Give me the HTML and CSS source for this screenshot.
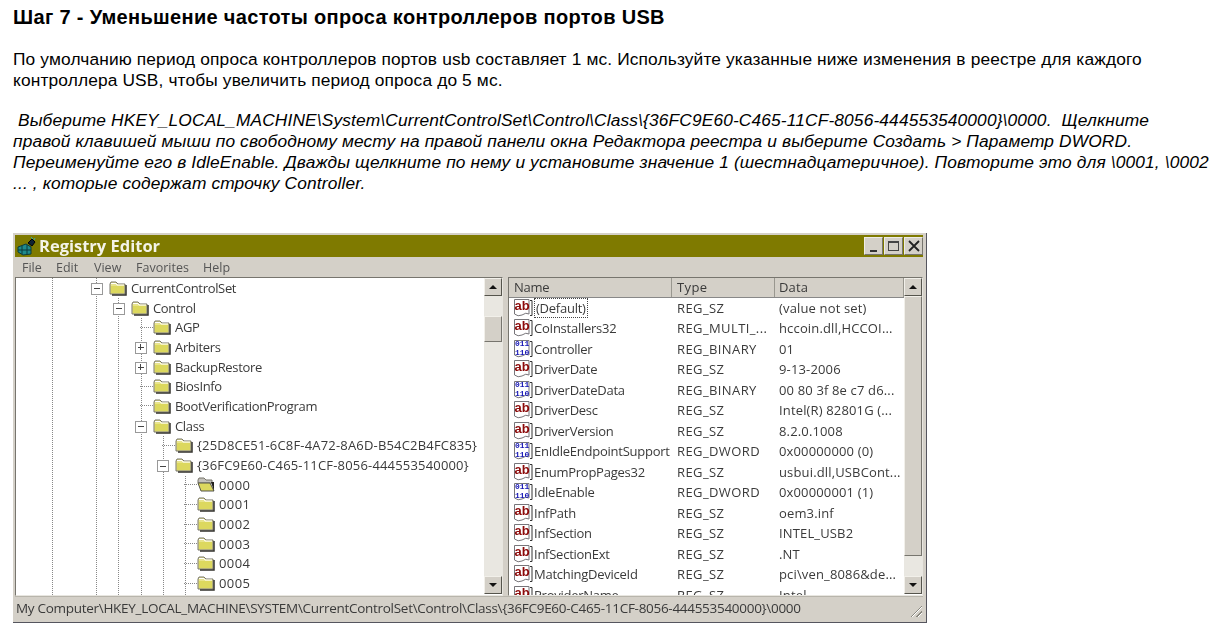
FILE: index.html
```html
<!DOCTYPE html>
<html lang="ru">
<head>
<meta charset="utf-8">
<title>Шаг 7</title>
<link rel="stylesheet" href="styles.css">
</head>
<body>
<svg class="defs" width="0" height="0" aria-hidden="true">
  <symbol id="folder" viewBox="0 0 18 16">
    <path d="M1 4 L2 2 H7 L9 4 H16 V14 H1 Z" fill="#e8e48c" stroke="#77756a" stroke-width="1"/>
    <path d="M2 6 H15 V13 H2 Z" fill="#dcd85e"/>
    <path d="M2 3.5 H7 L8 5 H15" fill="none" stroke="#fff" stroke-width="1"/>
    <path d="M17 5 V15 H3" fill="none" stroke="#33322c" stroke-width="1.5"/>
  </symbol>
  <symbol id="folder-open" viewBox="0 0 18 16">
    <path d="M1 3 L2 1 H7 L9 3 H15 V6 H1 Z" fill="#c4c2bc" stroke="#77756a"/>
    <path d="M1 6 H13 L17 14 H4 Z" fill="#dcd85e" stroke="#55544c"/>
    <path d="M14 5 L17 14 V5 Z" fill="#22211c"/>
  </symbol>
  <symbol id="page" viewBox="0 0 20 20">
    <path d="M1.5 1.5 H16 V16 Q13 14 9 17 Q5 19 1.5 16 Z" fill="#fff" stroke="#77757a"/>
    <path d="M17 2.5 H19 V17.5 H17" fill="none" stroke="#333"/>
  </symbol>
</svg>

<main class="article">
  <h1 class="step">Шаг 7 - Уменьшение частоты опроса контроллеров портов USB</h1>
  <p class="lead">По умолчанию период опроса контроллеров портов usb составляет 1 мс. Используйте указанные ниже изменения в реестре для каждого контроллера USB, чтобы увеличить период опроса до 5 мс.</p>
  <p class="note">&nbsp;Выберите HKEY_LOCAL_MACHINE\System\CurrentControlSet\Control\Class\{36FC9E60-C465-11CF-8056-444553540000}\0000.&nbsp; Щелкните<br>правой клавишей мыши по свободному месту на правой панели окна Редактора реестра и выберите Создать &gt; Параметр DWORD.<br>Переименуйте его в IdleEnable. Дважды щелкните по нему и установите значение 1 (шестнадцатеричное). Повторите это для \0001, \0002<br>... , которые содержат строчку Controller.</p>

  <section class="window">
    <header class="titlebar">
      <svg class="app-icon" viewBox="0 0 20 20" width="20" height="20">
        <path d="M1 11 L9 8 L14 11 L14 18 L6 19 L1 16 Z" fill="#1f8a8c" stroke="#0b3b3c"/>
        <path d="M5 10 V18 M10 9 V18 M1 14 L14 14" stroke="#0b3b3c" fill="none"/>
        <path d="M11 7 L15 3 L18 6 L15 10 Z" fill="#123" stroke="#000"/>
        <path d="M14 1 L16 3 M18 2 L17 4" stroke="#3aa" fill="none"/>
      </svg>
      <span class="title">Registry Editor</span>
      <div class="caption-buttons">
        <span class="cap"><i class="cap-min"></i></span>
        <span class="cap"><i class="cap-max"></i></span>
        <span class="cap cap-close">
          <svg viewBox="0 0 12 12" width="12" height="12"><path d="M1 1 L11 11 M11 1 L1 11" stroke="#222" stroke-width="1.8"/></svg>
        </span>
      </div>
    </header>
    <nav class="menubar">
      <span class="m-file">File</span><span class="m-edit">Edit</span><span class="m-view">View</span><span class="m-fav">Favorites</span><span>Help</span>
    </nav>
    <div class="panes">
      <div class="pane tree-pane">
        <div class="tree">
          <svg class="guides" width="470" height="320" aria-hidden="true">
            <path d="M36.5 0V320M80.5 0V320M102.5 20V320M125.5 40V320M147.5 158V320M169.5 198V320" fill="none" stroke="#888" stroke-dasharray="1 1"/>
          </svg>
          <div class="row l0"><span class="twisty minus"></span><svg class="fld"><use href="#folder"/></svg><span class="tl">CurrentControlSet</span></div>
          <div class="row l1"><span class="twisty minus"></span><svg class="fld"><use href="#folder"/></svg><span class="tl">Control</span></div>
          <div class="row l2"><span class="twisty none"></span><svg class="fld"><use href="#folder"/></svg><span class="tl">AGP</span></div>
          <div class="row l2"><span class="twisty plus"></span><svg class="fld"><use href="#folder"/></svg><span class="tl">Arbiters</span></div>
          <div class="row l2"><span class="twisty plus"></span><svg class="fld"><use href="#folder"/></svg><span class="tl">BackupRestore</span></div>
          <div class="row l2"><span class="twisty none"></span><svg class="fld"><use href="#folder"/></svg><span class="tl">BiosInfo</span></div>
          <div class="row l2"><span class="twisty none"></span><svg class="fld"><use href="#folder"/></svg><span class="tl">BootVerificationProgram</span></div>
          <div class="row l2"><span class="twisty minus"></span><svg class="fld"><use href="#folder"/></svg><span class="tl">Class</span></div>
          <div class="row l3"><span class="twisty none"></span><svg class="fld"><use href="#folder"/></svg><span class="tl guid">{25D8CE51-6C8F-4A72-8A6D-B54C2B4FC835}</span></div>
          <div class="row l3"><span class="twisty minus"></span><svg class="fld"><use href="#folder"/></svg><span class="tl guid">{36FC9E60-C465-11CF-8056-444553540000}</span></div>
          <div class="row l4"><span class="twisty none"></span><svg class="fld"><use href="#folder-open"/></svg><span class="tl num">0000</span></div>
          <div class="row l4"><span class="twisty none"></span><svg class="fld"><use href="#folder"/></svg><span class="tl num">0001</span></div>
          <div class="row l4"><span class="twisty none"></span><svg class="fld"><use href="#folder"/></svg><span class="tl num">0002</span></div>
          <div class="row l4"><span class="twisty none"></span><svg class="fld"><use href="#folder"/></svg><span class="tl num">0003</span></div>
          <div class="row l4"><span class="twisty none"></span><svg class="fld"><use href="#folder"/></svg><span class="tl num">0004</span></div>
          <div class="row l4"><span class="twisty none"></span><svg class="fld"><use href="#folder"/></svg><span class="tl num">0005</span></div>
        </div>
        <div class="scrollbar">
          <span class="sb-btn"><i class="arrow up"></i></span>
          <div class="track track-left"><span class="thumb thumb-left"></span></div>
          <span class="sb-btn"><i class="arrow down"></i></span>
        </div>
      </div>
      <div class="splitter"></div>
      <div class="pane list-pane">
        <div class="list">
          <div class="thead"><span class="th c-name">Name</span><span class="th c-type">Type</span><span class="th c-data">Data</span></div>
          <div class="tr"><span class="c-name"><span class="ico"><svg class="page"><use href="#page"/></svg><b class="ab-t">ab</b></span><span class="focus">(Default)</span></span><span class="c-type">REG_SZ</span><span class="c-data">(value not set)</span></div>
          <div class="tr"><span class="c-name"><span class="ico"><svg class="page"><use href="#page"/></svg><b class="ab-t">ab</b></span>CoInstallers32</span><span class="c-type">REG_MULTI_...</span><span class="c-data">hccoin.dll,HCCOI...</span></div>
          <div class="tr"><span class="c-name"><span class="ico"><svg class="page"><use href="#page"/></svg><b class="bin-t">011<br>110</b></span>Controller</span><span class="c-type">REG_BINARY</span><span class="c-data">01</span></div>
          <div class="tr"><span class="c-name"><span class="ico"><svg class="page"><use href="#page"/></svg><b class="ab-t">ab</b></span>DriverDate</span><span class="c-type">REG_SZ</span><span class="c-data">9-13-2006</span></div>
          <div class="tr"><span class="c-name"><span class="ico"><svg class="page"><use href="#page"/></svg><b class="bin-t">011<br>110</b></span>DriverDateData</span><span class="c-type">REG_BINARY</span><span class="c-data">00 80 3f 8e c7 d6...</span></div>
          <div class="tr"><span class="c-name"><span class="ico"><svg class="page"><use href="#page"/></svg><b class="ab-t">ab</b></span>DriverDesc</span><span class="c-type">REG_SZ</span><span class="c-data">Intel(R) 82801G (...</span></div>
          <div class="tr"><span class="c-name"><span class="ico"><svg class="page"><use href="#page"/></svg><b class="ab-t">ab</b></span>DriverVersion</span><span class="c-type">REG_SZ</span><span class="c-data">8.2.0.1008</span></div>
          <div class="tr"><span class="c-name"><span class="ico"><svg class="page"><use href="#page"/></svg><b class="bin-t">011<br>110</b></span>EnIdleEndpointSupport</span><span class="c-type">REG_DWORD</span><span class="c-data">0x00000000 (0)</span></div>
          <div class="tr"><span class="c-name"><span class="ico"><svg class="page"><use href="#page"/></svg><b class="ab-t">ab</b></span>EnumPropPages32</span><span class="c-type">REG_SZ</span><span class="c-data">usbui.dll,USBCont...</span></div>
          <div class="tr"><span class="c-name"><span class="ico"><svg class="page"><use href="#page"/></svg><b class="bin-t">011<br>110</b></span>IdleEnable</span><span class="c-type">REG_DWORD</span><span class="c-data">0x00000001 (1)</span></div>
          <div class="tr"><span class="c-name"><span class="ico"><svg class="page"><use href="#page"/></svg><b class="ab-t">ab</b></span>InfPath</span><span class="c-type">REG_SZ</span><span class="c-data">oem3.inf</span></div>
          <div class="tr"><span class="c-name"><span class="ico"><svg class="page"><use href="#page"/></svg><b class="ab-t">ab</b></span>InfSection</span><span class="c-type">REG_SZ</span><span class="c-data">INTEL_USB2</span></div>
          <div class="tr"><span class="c-name"><span class="ico"><svg class="page"><use href="#page"/></svg><b class="ab-t">ab</b></span>InfSectionExt</span><span class="c-type">REG_SZ</span><span class="c-data">.NT</span></div>
          <div class="tr"><span class="c-name"><span class="ico"><svg class="page"><use href="#page"/></svg><b class="ab-t">ab</b></span>MatchingDeviceId</span><span class="c-type">REG_SZ</span><span class="c-data">pci\ven_8086&amp;de...</span></div>
          <div class="tr"><span class="c-name"><span class="ico"><svg class="page"><use href="#page"/></svg><b class="ab-t">ab</b></span>ProviderName</span><span class="c-type">REG_SZ</span><span class="c-data">Intel</span></div>
        </div>
        <div class="scrollbar">
          <span class="sb-btn"><i class="arrow up"></i></span>
          <div class="track track-right"><span class="thumb thumb-right"></span></div>
          <span class="sb-btn"><i class="arrow down"></i></span>
        </div>
      </div>
    </div>
    <footer class="statusbar">My Computer\HKEY_LOCAL_MACHINE\SYSTEM\CurrentControlSet\Control\Class\{36FC9E60-C465-11CF-8056-444553540000}\0000<span class="grip"></span></footer>
  </section>
</main>
</body>
</html>
```
FILE: styles.css
```css
* { box-sizing: border-box; }
html, body { margin: 0; padding: 0; background: #fff; overflow: hidden; }
body { width: 1220px; height: 641px; font-family: "Liberation Sans", Arial, sans-serif; color: #000; }
.defs { position: absolute; }
.article { padding: 7px 0 0 13px; }
.step { margin: 0; font-size: 20px; line-height: 21px; font-weight: bold; letter-spacing: 0.33px; }
.lead { margin: 21px 0 0; width: 1190px; font-size: 17.33px; line-height: 21px; letter-spacing: 0.14px; }
.note { margin: 19px 0 0; width: 1207px; font-size: 17.33px; line-height: 21px; font-style: italic; letter-spacing: 0.14px; white-space: nowrap; }

.window {
  margin-top: 39px; width: 914px; height: 390px; display: flex; flex-direction: column;
  background: #d4d0c8; padding: 2px 3px 3px 2px;
  border-right: 1px solid #55555e; border-bottom: 1px solid #55555e;
  font-family: "Open Sans", sans-serif; color: #3a3a3a; filter: blur(0.5px);
}
.titlebar { height: 22px; flex: none; background: #7f7a00; display: flex; align-items: center; padding: 0 0 0 2px; color: #fff; }
.app-icon { flex: none; }
.title { margin-left: 2px; font: bold 16.5px/22px "Open Sans", sans-serif; color: #f4f4e8; }
.caption-buttons { margin-left: auto; display: flex; gap: 1px; }
.cap { width: 19px; height: 18px; background: #d4d0c8; border: 1px solid; border-color: #eeece6 #77756e #77756e #eeece6; display: flex; align-items: center; justify-content: center; }
.cap-min { width: 7px; height: 2px; background: #333; margin-top: 9px; }
.cap-max { width: 11px; height: 10px; border: 1px solid #444; border-top-width: 2px; }

.menubar { height: 20px; flex: none; display: flex; align-items: center; padding-left: 7px; font-size: 12.5px; gap: 13px; color: #555; }
.m-file { width: 21px; }
.m-edit { width: 25px; }
.m-view { width: 29px; }
.m-fav { width: 54px; }

.panes { flex: 1; min-height: 0; display: flex; }
.pane { display: flex; border: 1px solid; border-color: #77756e #e8e6e0 #e8e6e0 #77756e; background: #fff; overflow: hidden; height: 319px; }
.tree-pane { width: 488px; flex: none; }
.list-pane { flex: 1; min-width: 0; }
.splitter { width: 5px; flex: none; }

.tree { flex: 1; position: relative; overflow: hidden; }
.guides { position: absolute; left: 0; top: 0; }
.row { position: relative; height: 19.7px; display: flex; align-items: center; font-size: 13px; line-height: 18px; white-space: nowrap; }
.l0 { padding-left: 75px; }
.l1 { padding-left: 97px; }
.l2 { padding-left: 119px; }
.l3 { padding-left: 141px; }
.l4 { padding-left: 163px; }
.twisty { width: 18px; height: 10px; flex: none; position: relative; }
.twisty.minus::before, .twisty.plus::before {
  content: ""; position: absolute; left: 0; top: 0; width: 10px; height: 10px;
  border: 1px solid #999;
  background: linear-gradient(#444, #444) center / 6px 1px no-repeat, #fff;
}
.twisty.plus::after { content: ""; position: absolute; left: 4.5px; top: 2px; width: 1px; height: 6px; background: #444; }
.twisty.none { border-bottom: 1px dotted #888; height: 6px; margin-bottom: 5px; margin-left: 5px; width: 13px; }
.fld { width: 18px; height: 16px; flex: none; }
.tl { margin-left: 4px; letter-spacing: -0.33px; }
.tl.guid { letter-spacing: 0.18px; }
.tl.num { letter-spacing: 0.4px; }

.scrollbar { width: 18px; flex: none; display: flex; flex-direction: column; background: #e9e7e1; height: 316px; }
.sb-btn { height: 18px; flex: none; background: #d4d0c8; border: 1px solid; border-color: #f2f0ea #55544c #55544c #f2f0ea; display: flex; align-items: center; justify-content: center; }
.arrow { width: 0; height: 0; border-left: 4px solid transparent; border-right: 4px solid transparent; }
.arrow.up { border-bottom: 4px solid #111; }
.arrow.down { border-top: 4px solid #111; }
.track { flex: 1; display: flex; flex-direction: column; }
.track-left { padding-top: 20px; }
.thumb { display: block; background: #d4d0c8; border: 1px solid; border-color: #f2f0ea #77756e #77756e #f2f0ea; }
.thumb-left { height: 26px; }
.thumb-right { height: 260px; }

.list { flex: 1; min-width: 0; overflow: hidden; font-size: 13px; }
.thead { height: 19.5px; display: flex; background: #d4d0c8; border-bottom: 1px solid #888; letter-spacing: -0.1px; }
.th { display: flex; align-items: center; border-right: 1px solid #99978f; line-height: 16px; }
.thead .c-name { padding-left: 5px; }
.c-name { width: 163px; flex: none; display: flex; align-items: center; letter-spacing: -0.25px; }
.c-type { width: 103px; flex: none; padding-left: 5px; letter-spacing: 0.4px; }
.c-data { flex: 1; padding-left: 4px; white-space: nowrap; letter-spacing: 0.15px; }
.tr { height: 20.5px; display: flex; align-items: center; line-height: 18px; white-space: nowrap; }
.tr .c-name { padding-left: 4px; }
.ico { position: relative; display: block; width: 20px; height: 20px; flex: none; margin-right: 1px; }
.page { display: block; width: 20px; height: 20px; }
.ab-t { position: absolute; left: 1px; top: 2px; width: 16px; text-align: center; font: bold 13px/12px "Liberation Sans", sans-serif; letter-spacing: 0; color: #8c0a0a; }
.bin-t { position: absolute; left: 2px; top: 0; width: 14px; text-align: center; font: bold 8px/9px "Liberation Mono", monospace; letter-spacing: 0; color: #1515b5; }
.focus { outline: 1px dotted #444; padding: 0 1px; margin-left: 1px; }

.statusbar { height: 23px; flex: none; margin-top: 2px; position: relative; display: flex; align-items: center; font-size: 13.5px; padding-left: 1px; border-top: 1px solid #b8b5ac; white-space: nowrap; letter-spacing: -0.29px; }
.grip { position: absolute; right: 1px; bottom: 2px; width: 13px; height: 13px; background: repeating-linear-gradient(135deg, transparent 0 2px, #8a887f 2px 3px, #fff 3px 4px); clip-path: polygon(100% 0, 100% 100%, 0 100%); }
```
